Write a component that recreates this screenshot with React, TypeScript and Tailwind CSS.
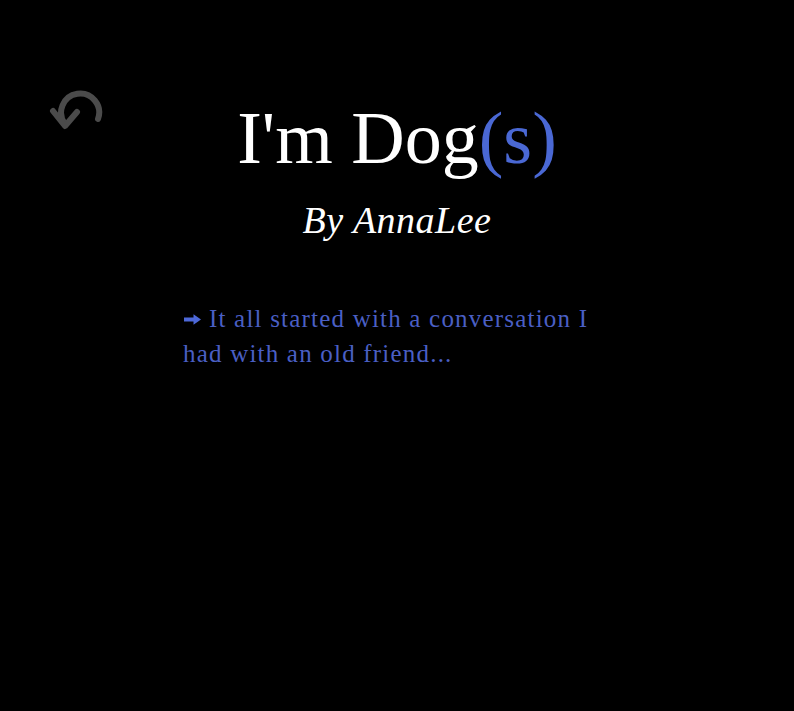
export default function App() {
	return (
		<div className="min-h-[711px] w-full bg-black relative" style={{ fontFamily: '"Liberation Serif", serif' }}>
			<button className="absolute left-[47px] top-[90px]" aria-label="Back">
				<svg width="58" height="42" viewBox="0 0 58 42" fill="none" stroke="#4b4b4b" strokeWidth="6" strokeLinecap="round" strokeLinejoin="round">
					<path d="M18 34 A19 19 0 1 1 51 29" />
					<path d="M6 21 L18 36 L30 22" />
				</svg>
			</button>
			<div className="flex flex-col items-center pt-[98px]">
				<h1 className="text-white text-[74px] leading-[80px] font-normal">
					I'm Dog<span className="text-[#4a68d4]">(s)</span>
				</h1>
				<p className="text-white italic text-[38px] leading-[40px] mt-[22px] tracking-[0.5px]">By AnnaLee</p>
			</div>
			<p className="w-[428px] mx-auto mt-[61px] text-[#4a5fc4] text-[25px] leading-[35px] tracking-[1.2px]">
				<svg
					width="17"
					height="11"
					viewBox="0 0 17 11"
					className="inline-block align-[2px] ml-[1px] mr-[8px]"
					fill="#4d68d8"
				>
					<path d="M0 3.6 H9.5 V0.3 L17 5.5 L9.5 10.7 V7.4 H0 Z" />
				</svg>
				It all started with a conversation I had with an old friend...
			</p>
		</div>
	);
}
